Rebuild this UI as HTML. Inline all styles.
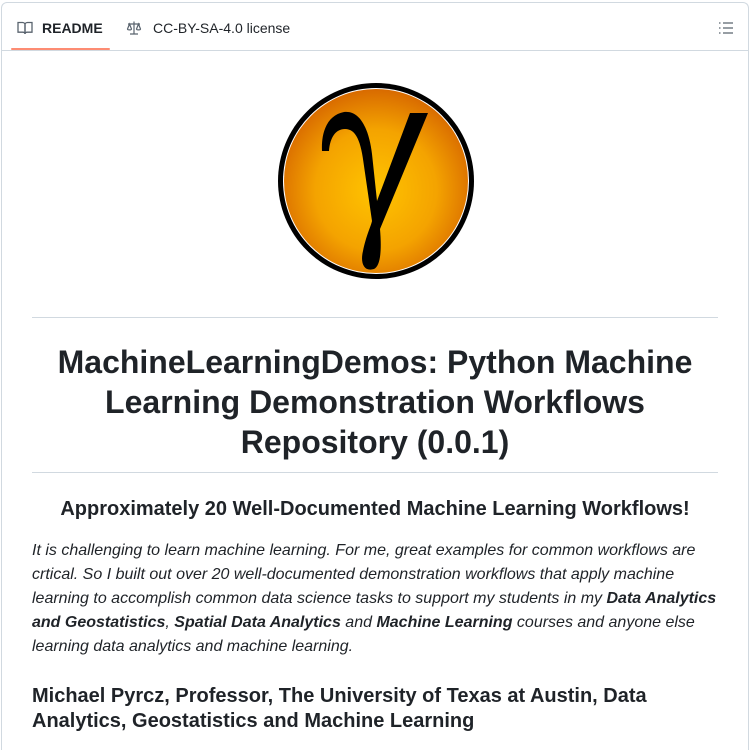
<!DOCTYPE html>
<html><head><meta charset="utf-8"><style>
*{margin:0;padding:0;box-sizing:border-box}
html,body{width:750px;height:750px;overflow:hidden}
body{background:#fff;font-family:"Liberation Sans",Arial,sans-serif;color:#1f2328;position:relative}
.box{position:absolute;left:1px;top:2px;width:748px;height:748px;border:1px solid #d1d9e0;border-bottom:none;border-radius:6px 6px 0 0}
.hdr{position:absolute;left:0;top:0;width:746px;height:48px;border-bottom:1px solid #d1d9e0}
.tab{position:absolute;top:16px;font-size:14px;line-height:18px}
.ul{position:absolute;left:9px;top:45px;width:99px;height:2px;background:#fd8c73;border-radius:2px}
.c{position:absolute;left:32px;width:686px}
h1{font-size:32px;line-height:40px;text-align:center;font-weight:bold}
.hr{position:absolute;left:32px;width:686px;height:1px;background:#d1d9e0}
p{font-size:16px;line-height:24px;font-style:italic}
</style></head><body>
<div class="box">
<div class="hdr">
<svg style="position:absolute;left:15px;top:17px" width="16" height="16" viewBox="0 0 16 16" fill="none" stroke="#59636e" stroke-width="1.3"><path d="M1 2.5h4.5c1.4 0 2.5 1 2.5 2.3V14c0-1-1-1.8-2.2-1.8H1z"/><path d="M15 2.5h-4.5C9.1 2.5 8 3.5 8 4.8V14c0-1 1-1.8 2.2-1.8H15z"/></svg>
<div class="tab" style="left:40px;font-weight:bold">README</div>
<svg style="position:absolute;left:124px;top:17px" width="16" height="16" viewBox="0 0 16 16" fill="none" stroke="#59636e" stroke-width="1.2"><path d="M8 1.5v12M4 14h8M2 4h12M3.5 4l-2 5c0 1.2 4 1.2 4 0zM12.5 4l-2 5c0 1.2 4 1.2 4 0z"/></svg>
<div class="tab" style="left:151px;color:#1f2328">CC-BY-SA-4.0 license</div>
<svg style="position:absolute;left:716px;top:17px" width="16" height="16" viewBox="0 0 16 16" stroke="#59636e" stroke-width="1.3"><path d="M1 3h1.5M1 8h1.5M1 13h1.5M5 3h10M5 8h10M5 13h10"/></svg>
<div class="ul"></div>
</div>
</div>
<svg style="position:absolute;left:276px;top:81px" width="200" height="200" viewBox="0 0 200 200">
<defs><radialGradient id="g" cx="50%" cy="55%" r="55%"><stop offset="0" stop-color="#ffc400"/><stop offset="0.6" stop-color="#f4a300"/><stop offset="1" stop-color="#d86a00"/></radialGradient></defs>
<circle cx="100" cy="100" r="98" fill="#000"/>
<circle cx="100" cy="100" r="93" fill="#fff"/>
<circle cx="100" cy="100" r="92" fill="url(#g)"/>
<path d="M46 70 C45 50 52 34 68 31 C84 29 93 48 96 73 L101 120 L134 32 L152 32 L104 148 C106 172 104 185 98 188 C88 191 84 182 87 170 C90 155 95 145 96 140 L88 85 C85 60 80 48 69 48 C60 48 54 56 53 70 Z" fill="#000"/>
</svg>
<div class="hr" style="top:317px"></div>
<h1 class="c" style="top:342px">MachineLearningDemos: Python Machine Learning Demonstration Workflows Repository (0.0.1)</h1>
<div class="hr" style="top:472px"></div>
<div class="c" style="top:497px;font-size:20px;font-weight:bold;text-align:center;line-height:25px">Approximately 20 Well-Documented Machine Learning Workflows!</div>
<p class="c" style="top:539px">It is challenging to learn machine learning. For me, great examples for common workflows are crtical. So I built out over 20 well-documented demonstration workflows that apply machine learning to accomplish common data science tasks to support my students in my <b>Data Analytics and Geostatistics</b>, <b>Spatial Data Analytics</b> and <b>Machine Learning</b> courses and anyone else learning data analytics and machine learning.</p>
<div class="c" style="top:684px;font-size:20px;font-weight:bold;line-height:25px">Michael Pyrcz, Professor, The University of Texas at Austin, Data Analytics, Geostatistics and Machine Learning</div>
</body></html>
